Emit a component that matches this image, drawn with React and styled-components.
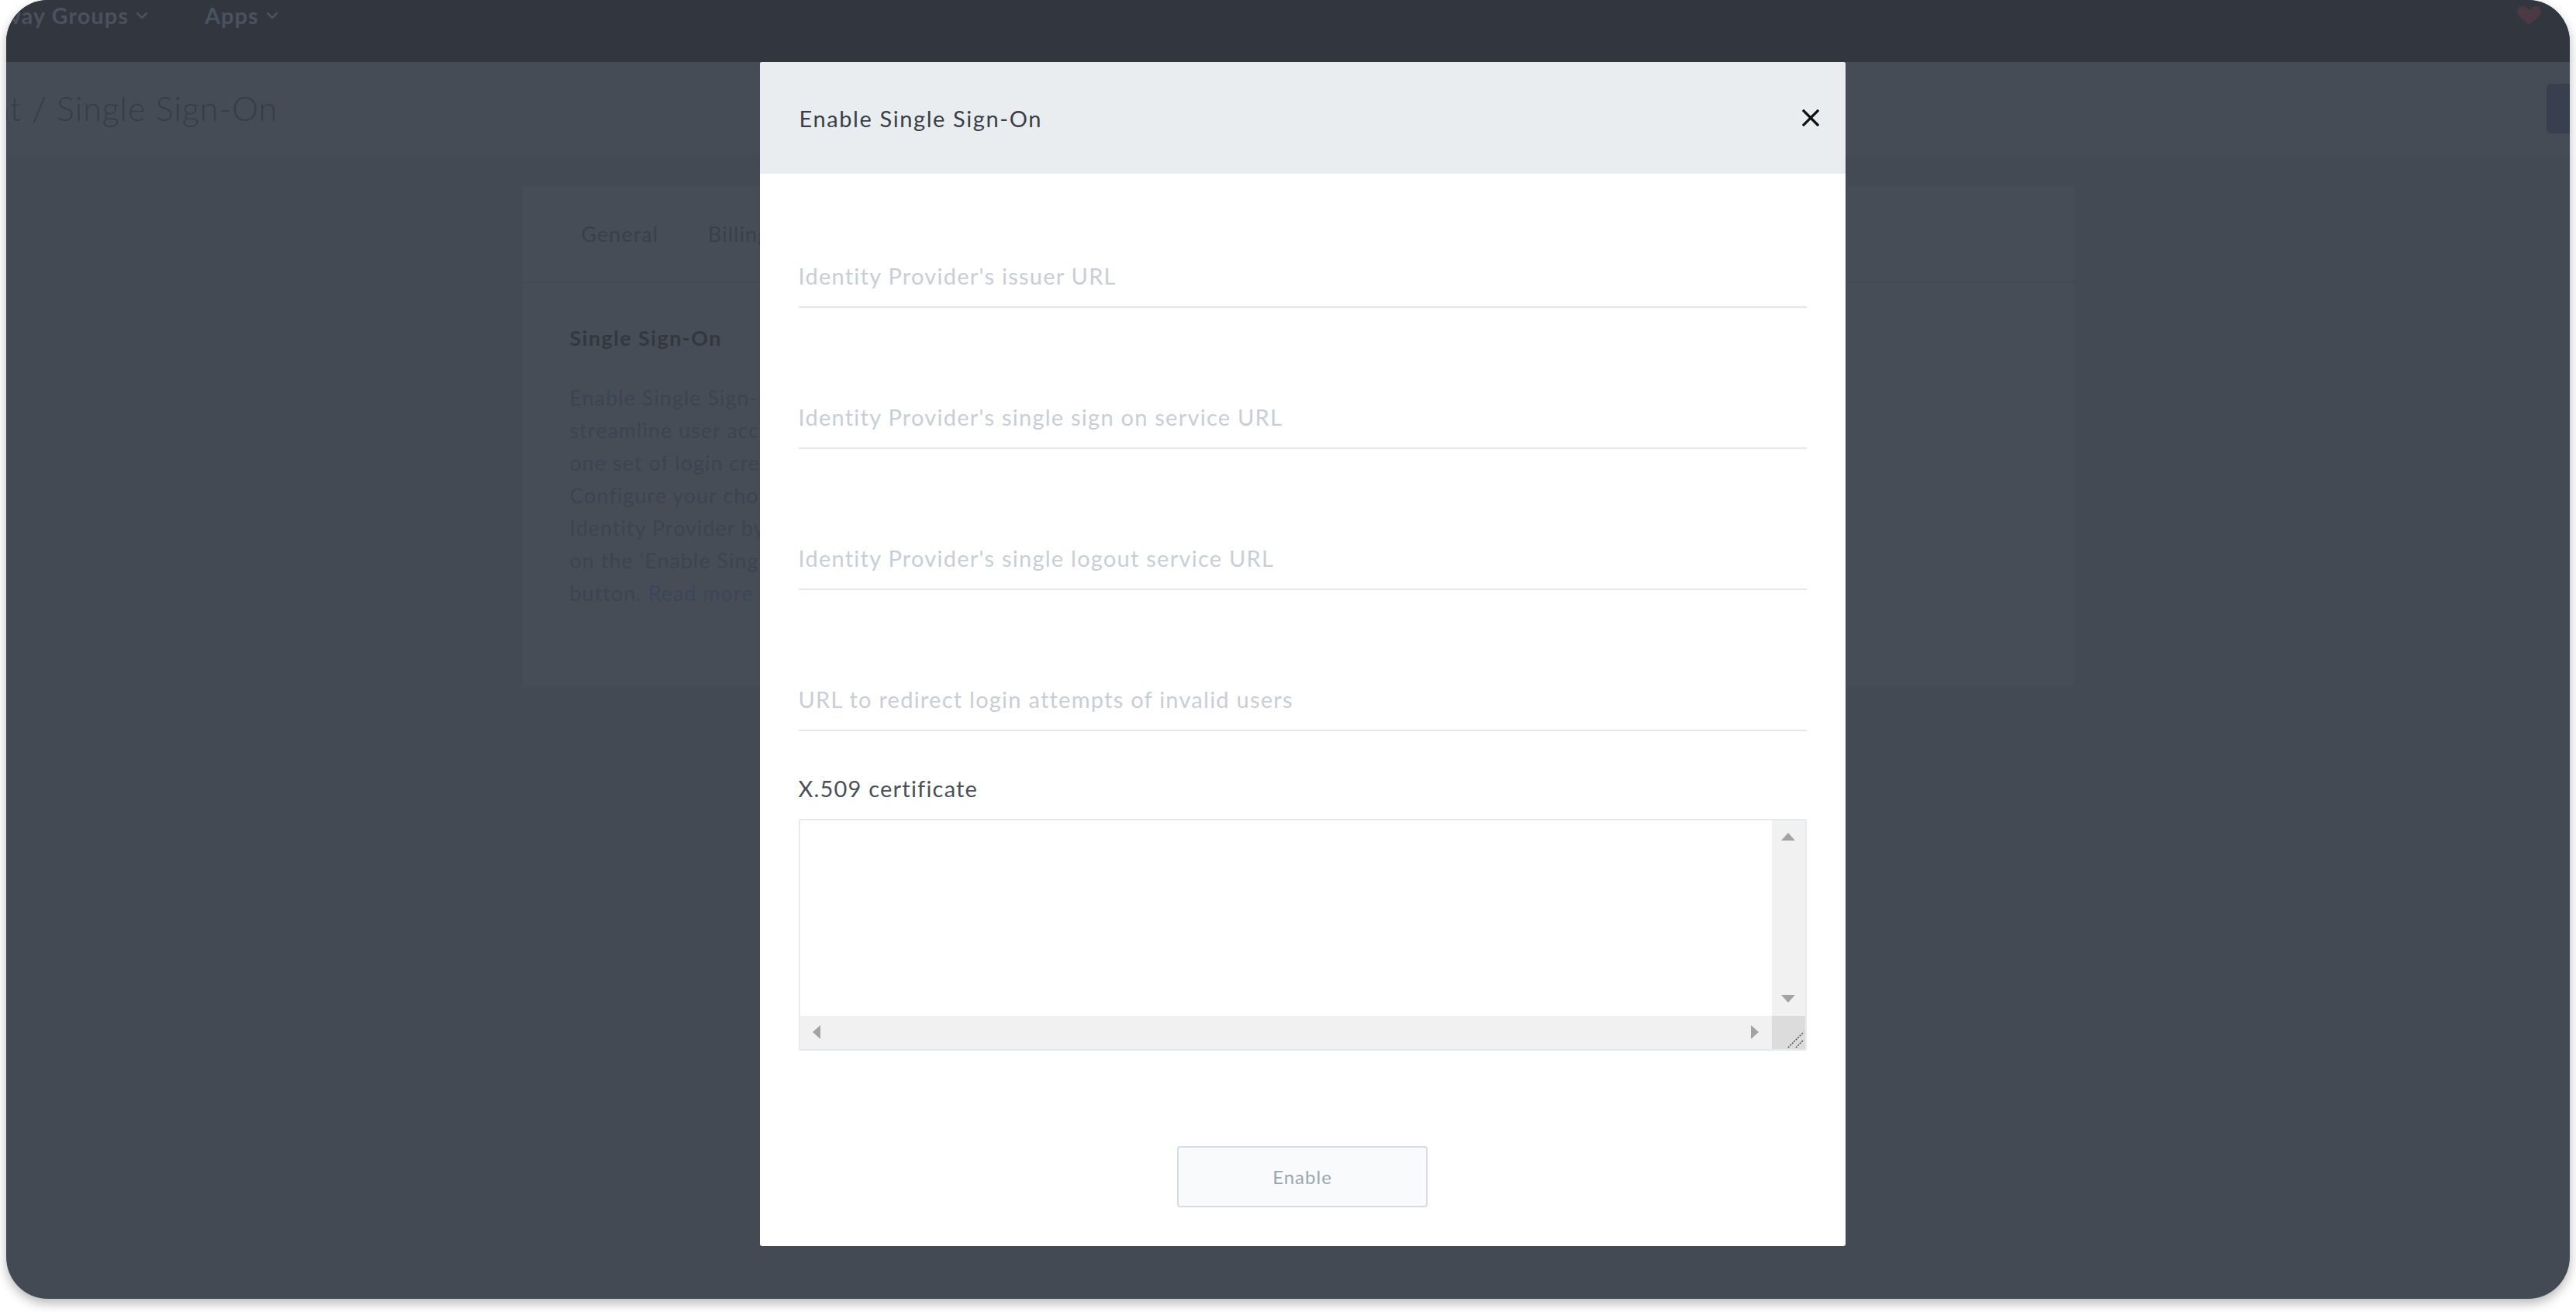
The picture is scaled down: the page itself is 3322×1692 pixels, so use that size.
import styled, { createGlobalStyle } from 'styled-components';

const GlobalStyle = createGlobalStyle`
  html, body {
    margin: 0;
    padding: 0;
    background: #ffffff;
  }
  body {
    font-family: Lato, "Open Sans", sans-serif;
  }
  * {
    box-sizing: border-box;
  }
`;

const Frame = styled.div`
  width: 3322px;
  height: 1692px;
  padding: 0 8px 17px 8px;
  background: #ffffff;
`;

const Window = styled.div`
  position: relative;
  height: 100%;
  display: flex;
  flex-direction: column;
  border-radius: 54px;
  overflow: hidden;
  background: #434a54;
  box-shadow: 0 6px 14px rgba(0, 0, 0, 0.28);
`;

/* ---------- page under the dialog (dimmed) ---------- */

const TopNav = styled.nav`
  flex: none;
  height: 80px;
  display: flex;
  align-items: flex-start;
  gap: 73px;
  padding: 3px 36px 0 0;
  background: #31363f;
`;

const NavItem = styled.div`
  display: flex;
  align-items: center;
  gap: 9px;
  margin-left: ${(p) => p.$shift || 0}px;
  font-size: 29px;
  font-weight: 700;
  line-height: 1.2;
  letter-spacing: 1px;
  color: #4a525d;
  white-space: nowrap;
`;

const Heart = styled.svg`
  margin-left: auto;
  margin-top: 5px;
  flex: none;
`;

const SubHeader = styled.div`
  flex: none;
  height: 120px;
  display: flex;
  align-items: center;
  justify-content: space-between;
  background: #464c56;
`;

const PageTitle = styled.h1`
  margin: -2px 0 0 -139px;
  font-size: 43px;
  font-weight: 300;
  letter-spacing: 0.9px;
  color: #363c45;
  white-space: nowrap;
`;

const PrimaryButton = styled.div`
  width: 100px;
  height: 64px;
  margin-right: -70px;
  border-radius: 5px;
  background: #38404f;
`;

const PageBody = styled.main`
  flex: 1;
  display: flex;
  justify-content: center;
  align-items: flex-start;
  padding: 40px 0 0 25px;
`;

const Card = styled.section`
  width: 2000px;
  display: flex;
  flex-direction: column;
  background: #474d57;
`;

const Tabs = styled.div`
  height: 125px;
  display: flex;
  align-items: center;
  gap: 64px;
  padding-left: 76px;
  border-bottom: 2px solid #444a53;
`;

const Tab = styled.span`
  font-size: 27px;
  letter-spacing: 1px;
  color: #3a4049;
`;

const CardContent = styled.div`
  padding: 55px 0 100px 61px;
`;

const SectionTitle = styled.h2`
  margin: 0;
  font-size: 27px;
  font-weight: 700;
  line-height: 1.2;
  letter-spacing: 1.4px;
  color: #32383f;
`;

const Description = styled.p`
  margin: 40px 0 0;
  font-size: 27px;
  line-height: 42px;
  letter-spacing: 1px;
  color: #3d4450;
`;

const MoreLink = styled.a`
  color: #3b4658;
  text-decoration: none;
`;

/* ---------- dialog ---------- */

const Overlay = styled.div`
  position: absolute;
  inset: 0;
  display: flex;
  justify-content: center;
  align-items: flex-start;
  padding: 80px 0 0 37px;
`;

const Modal = styled.div`
  width: 1400px;
  display: flex;
  flex-direction: column;
  border-radius: 3px;
  overflow: hidden;
  background: #ffffff;
`;

const ModalHeader = styled.header`
  height: 144px;
  display: flex;
  align-items: center;
  justify-content: space-between;
  padding: 0 33px 0 51px;
  background: #e9edf0;
`;

const ModalTitle = styled.h3`
  margin: 0;
  font-size: 29px;
  font-weight: 400;
  letter-spacing: 1.6px;
  color: #3a3f47;
`;

const CloseButton = styled.button`
  width: 24px;
  height: 24px;
  padding: 0;
  border: none;
  background: none;
  display: flex;
  align-items: center;
  justify-content: center;
  cursor: pointer;
`;

const ModalBody = styled.div`
  display: flex;
  flex-direction: column;
  padding: 111px 50px 50px 50px;
`;

const Fields = styled.div`
  display: flex;
  flex-direction: column;
  gap: 120px;
`;

const TextInput = styled.input`
  width: 100%;
  height: 62px;
  padding: 0 0 20px;
  border: none;
  border-bottom: 2px solid #e4e8ed;
  outline: none;
  font-family: inherit;
  font-size: 29px;
  letter-spacing: 1.25px;
  color: #3a3f47;
  background: transparent;

  &::placeholder {
    color: #c8ced6;
  }
`;

const Label = styled.label`
  margin: 57px 0 22px;
  font-size: 29px;
  line-height: 1.16;
  letter-spacing: 1.2px;
  color: #4a4f57;
`;

const CertBox = styled.div`
  height: 299px;
  display: grid;
  grid-template-columns: 1fr 43px;
  grid-template-rows: 1fr 43px;
  border: 2px solid #e6eaef;
  border-radius: 3px;
  overflow: hidden;
`;

const CertArea = styled.textarea`
  border: none;
  outline: none;
  resize: none;
  overflow: hidden;
  padding: 10px 12px;
  font-family: inherit;
  font-size: 24px;
  background: #ffffff;
`;

const ScrollTrack = styled.div`
  display: flex;
  flex-direction: ${(p) => (p.$vertical ? 'column' : 'row')};
  justify-content: space-between;
  background: #f1f1f1;
`;

const ScrollArrow = styled.div`
  width: 43px;
  height: 43px;
  display: flex;
  align-items: center;
  justify-content: center;
`;

const Resizer = styled.div`
  display: flex;
  align-items: flex-end;
  justify-content: flex-end;
  background: #dcdcdc;
`;

const Footer = styled.div`
  display: flex;
  justify-content: center;
  margin-top: 123px;
`;

const EnableButton = styled.button`
  width: 323px;
  height: 79px;
  border: 2px solid #d5dce3;
  border-radius: 4px;
  background: #f8fafc;
  font-family: inherit;
  font-size: 24px;
  letter-spacing: 1px;
  color: #9ba5b0;
  cursor: default;
`;

const Chevron = () => (
  <svg width="16" height="10" viewBox="0 0 16 10">
    <path d="M2 2l6 6 6-6" fill="none" stroke="#4a525d" strokeWidth="2.6" strokeLinecap="round" strokeLinejoin="round" />
  </svg>
);

const Arrow = ({ dir }) => {
  const shapes = {
    up: { w: 18, h: 10, pts: '0,10 9,0 18,10' },
    down: { w: 18, h: 10, pts: '0,0 18,0 9,10' },
    left: { w: 10, h: 18, pts: '10,0 10,18 0,9' },
    right: { w: 10, h: 18, pts: '0,0 10,9 0,18' },
  };
  const s = shapes[dir];
  return (
    <ScrollArrow>
      <svg width={s.w} height={s.h} viewBox={`0 0 ${s.w} ${s.h}`}>
        <polygon points={s.pts} fill="#a3a3a3" />
      </svg>
    </ScrollArrow>
  );
};

const fields = [
  "Identity Provider's issuer URL",
  "Identity Provider's single sign on service URL",
  "Identity Provider's single logout service URL",
  'URL to redirect login attempts of invalid users',
];

export default function App() {
  return (
    <>
      <GlobalStyle />
      <Frame>
        <Window>
          <TopNav>
            <NavItem $shift={-70}>
              Gateway Groups <Chevron />
            </NavItem>
            <NavItem>
              Apps <Chevron />
            </NavItem>
            <Heart width="33" height="24" viewBox="0 0 33 24">
              <path d="M16.5 24 C10 18 1 13 1 6.5 C1 2.5 4.5 0 8 0 C11.5 0 14.5 2 16.5 5 C18.5 2 21.5 0 25 0 C28.5 0 32 2.5 32 6.5 C32 13 23 18 16.5 24 Z" fill="#4b3943" />
            </Heart>
          </TopNav>

          <SubHeader>
            <PageTitle>Account / Single Sign-On</PageTitle>
            <PrimaryButton />
          </SubHeader>

          <PageBody>
            <Card>
              <Tabs>
                <Tab>General</Tab>
                <Tab>Billing</Tab>
                <Tab>Users</Tab>
              </Tabs>
              <CardContent>
                <SectionTitle>Single Sign-On</SectionTitle>
                <Description>
                  Enable Single Sign-On to<br />
                  streamline user access with<br />
                  one set of login credentials.<br />
                  Configure your chosen<br />
                  Identity Provider by clicking<br />
                  on the 'Enable Single Sign-On'<br />
                  button. <MoreLink>Read more</MoreLink>
                </Description>
              </CardContent>
            </Card>
          </PageBody>

          <Overlay>
            <Modal>
              <ModalHeader>
                <ModalTitle>Enable Single Sign-On</ModalTitle>
                <CloseButton aria-label="Close">
                  <svg width="22" height="22" viewBox="0 0 22 22">
                    <path d="M2 2L20 20M20 2L2 20" stroke="#111" strokeWidth="3.2" strokeLinecap="square" />
                  </svg>
                </CloseButton>
              </ModalHeader>
              <ModalBody>
                <Fields>
                  {fields.map((f) => (
                    <TextInput key={f} placeholder={f} />
                  ))}
                </Fields>
                <Label>X.509 certificate</Label>
                <CertBox>
                  <CertArea />
                  <ScrollTrack $vertical>
                    <Arrow dir="up" />
                    <Arrow dir="down" />
                  </ScrollTrack>
                  <ScrollTrack>
                    <Arrow dir="left" />
                    <Arrow dir="right" />
                  </ScrollTrack>
                  <Resizer>
                    <svg width="24" height="24" viewBox="0 0 24 24">
                      <path d="M2 22L22 2M12 22L22 12" stroke="#555" strokeWidth="1.6" strokeDasharray="2 1.5" />
                    </svg>
                  </Resizer>
                </CertBox>
                <Footer>
                  <EnableButton>Enable</EnableButton>
                </Footer>
              </ModalBody>
            </Modal>
          </Overlay>
        </Window>
      </Frame>
    </>
  );
}
